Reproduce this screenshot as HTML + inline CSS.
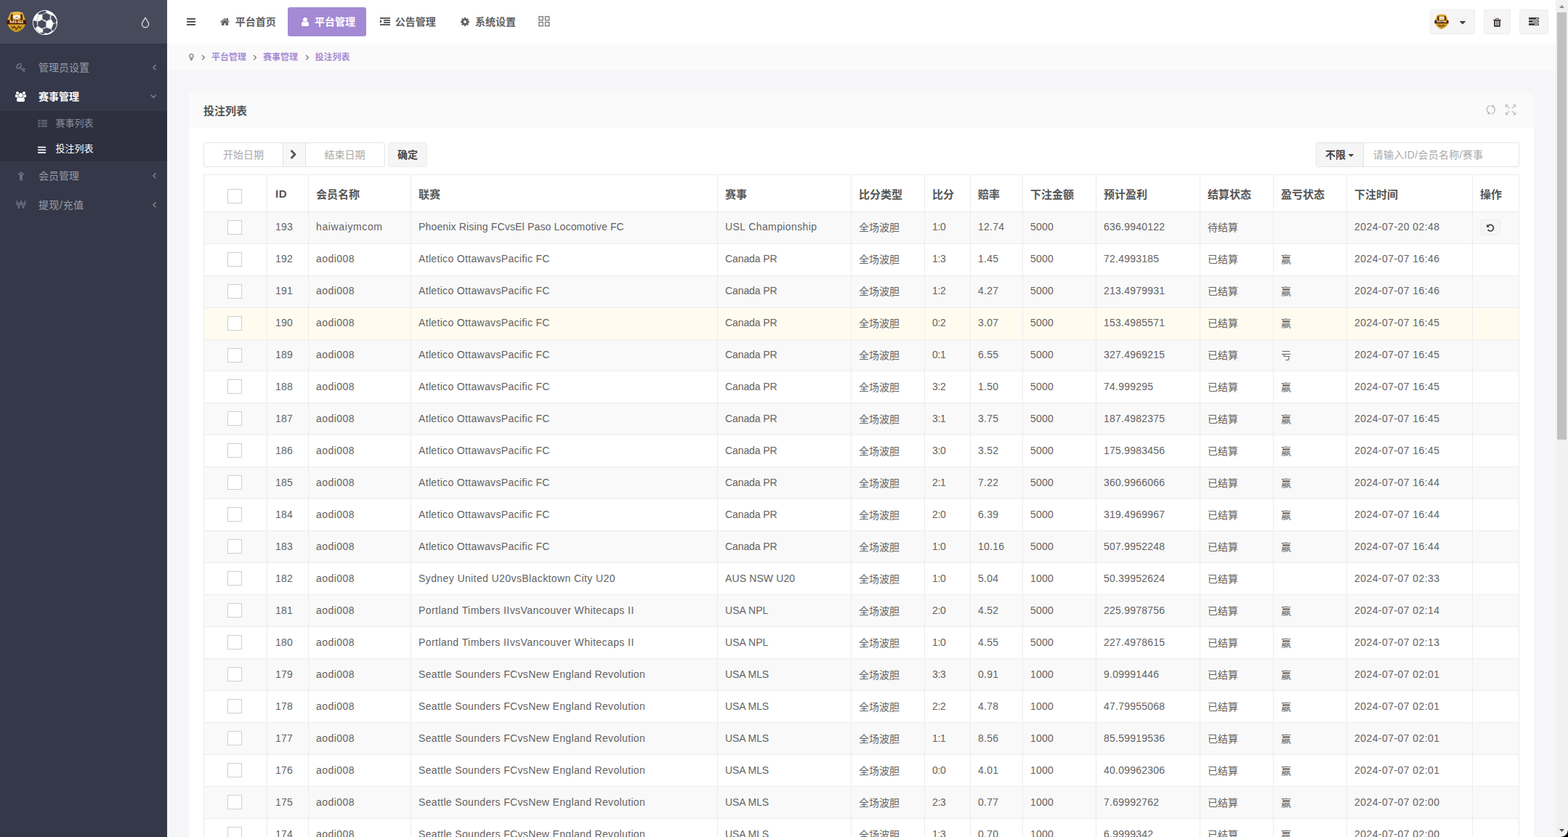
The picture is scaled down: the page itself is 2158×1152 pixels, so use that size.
<!DOCTYPE html><html lang="zh-CN"><head><meta charset="utf-8"><title>投注列表</title><style>*{box-sizing:border-box;margin:0;padding:0}
html,body{width:2158px;height:1152px;overflow:hidden;background:#f6f6f8;font-family:"Liberation Sans","Noto Sans CJK SC",sans-serif;font-size:14px;color:#5a5a5a}
.ic{display:inline-block;overflow:visible}
#side{position:absolute;left:0;top:0;width:230px;height:1152px;background:#353849}
#brand{position:absolute;left:0;top:0;width:230px;height:60px;background:#464a5b}
.mi{position:absolute;left:0;width:230px;height:40px}
.mi .mt{position:absolute;left:53px;top:0;line-height:40px;font-size:14px;white-space:nowrap}
.mi.on .mt{font-weight:bold}
#sub{position:absolute;left:0;top:153px;width:230px;height:69px;background:#2e3040}
.si{position:relative;height:35px;line-height:34px;font-size:13px;color:#8b8d9a}
.si span{position:absolute;left:76.5px;white-space:nowrap}
.si.on{color:#fff}
#head{position:absolute;left:230px;top:0;width:1911px;height:60px;background:#fff}
.tabbg{position:absolute;left:166px;top:10px;width:108px;height:40px;background:#a48ad4;border-radius:3px}
.tt{position:absolute;top:0;line-height:60px;font-weight:bold;font-size:14px;white-space:nowrap}
.hb{position:absolute;top:13px;height:34px;background:#f5f5f5;border:1px solid #eee;border-radius:2px}
#bc{position:absolute;left:230px;top:60px;width:1911px;height:37px;background:#fafafa}
.bl{position:absolute;top:0;line-height:39px;font-size:12px;font-weight:bold;color:#a48ad4;white-space:nowrap}
#panel{position:absolute;left:260px;top:128px;width:1851px;height:1100px;background:#fff}
#ph{position:absolute;left:0;top:0;width:1851px;height:48px;background:#fafafa}
#pt{position:absolute;left:20px;top:1px;line-height:48px;font-size:15px;font-weight:bold;color:#555}
#pb{position:absolute;left:0;top:48px;width:1851px}
.grp{position:absolute;top:20px;height:34px;border:1px solid #e4e4e4;border-radius:3px;background:#fff;overflow:hidden}
.ph{position:absolute;top:0;height:32px;line-height:32px;text-align:center;color:#a9a9a9;font-size:14px}
.addon{position:absolute;top:0;height:32px;background:#f7f7f7;border-left:1px solid #e2e2e2;border-right:1px solid #e2e2e2}
.btn{position:absolute;top:20px;height:34px;line-height:32px;text-align:center;background:#f5f5f5;border:1px solid #ececec;border-radius:3px;font-weight:bold;color:#444}
.addon2{position:absolute;top:0;height:32px;line-height:32px;background:#f5f5f5;border-right:1px solid #e2e2e2;padding-left:12px;color:#444}
.ph2{position:absolute;top:0;line-height:33px;color:#a9a9a9;white-space:nowrap;letter-spacing:.3px}
#t{position:absolute;left:20px;top:64px;width:1811px;table-layout:fixed;border-collapse:separate;border-spacing:0;border-right:1px solid #ececec;border-bottom:1px solid #ececec}
#t th,#t td{border-left:1px solid #ececec;border-top:1px solid #ececec;padding:0 0 0 10px;text-align:left;white-space:nowrap;overflow:hidden;vertical-align:middle;position:relative}
#t th{height:51px;font-size:15px;font-weight:bold;color:#555;padding-top:1px}
#t td{height:44px;font-size:14px;color:#636363;padding-bottom:3px}
#t td.n{letter-spacing:.23px}
#t td.i{padding-left:11px}
#t td.s{letter-spacing:-.4px}
#t td.d{letter-spacing:.43px}
#t tr.odd td{background:#f9f9f9}
#t tr.sh td{height:43px;padding-bottom:2px}
#t tr.lo td{padding-bottom:1px}
#t tr.hov td{background:#fffcef}
#t td.c{padding:0 2px 1px 0;text-align:center}
#t tr.sh td.c{padding-bottom:0}
#t th.c{padding:7px 2px 0 0;text-align:center}
.cb{display:inline-block;width:20px;height:20px;border:1px solid #cfcfcf;background:#fff;vertical-align:middle}
.ub{position:absolute;left:10px;top:10px;width:28px;height:22px;background:#f5f5f5;border:1px solid #ececec;border-radius:3px}
#sb{position:absolute;left:2141px;top:0;width:17px;height:1152px;background:#f1f1f1}
#thumb{position:absolute;left:2px;top:17px;width:13px;height:588px;background:#c1c1c1}
#corner{position:absolute;right:0;bottom:0;width:9px;height:9px;background:radial-gradient(circle at 0 0,rgba(0,0,0,0) 8px,#000 9px)}
</style></head><body>
<div id="side">
<div id="brand"><svg style="position:absolute;left:9px;top:15px" width="28" height="30" viewBox="0 0 28 30"><defs><linearGradient id="lg1" x1="0" y1="0" x2="0" y2="1"><stop offset="0" stop-color="#e6bd48"/><stop offset="0.5" stop-color="#d8a52c"/><stop offset="1" stop-color="#c29416"/></linearGradient></defs><path d="M5.7 2.5Q13.5 -0.4 22.1 2.5C23.5 6 25.5 11 26.8 15C26.2 19 25 21 23.9 23C21 26 17 28.5 13.3 29.5C9.5 28.5 6 26 3.9 23C2.6 21 1.2 19 0.4 15C1.6 11 4 6 5.7 2.5Z" fill="url(#lg1)"/><path d="M6.4 4.6C5.2 7.4 5.4 10.4 6 12.6L9 12.6C8 10 8 7 8.8 4.2ZM21.4 4.6C22.6 7.4 22.4 10.4 21.8 12.6L18.8 12.6C19.8 10 19.8 7 19 4.2Z" fill="#5a2409"/><path d="M0.3 12.5H27V18.4H0.3Z" fill="#4a1606"/><ellipse cx="14" cy="8.3" rx="4.5" ry="2.8" fill="#fbf6ee"/><ellipse cx="14.2" cy="9" rx="2.2" ry="1.3" fill="#b9b0ae"/><text x="4" y="17.3" font-size="5.2" font-weight="bold" textLength="19.6" lengthAdjust="spacingAndGlyphs" fill="#fbe3b0" font-family="Liberation Sans,sans-serif">MHB</text><path d="M6.1 20L8.4 22.6L10.8 20.4L13.6 24.6L16.4 20.4L18.8 22.6L21.2 20L19 24.4L16.4 22.6L13.6 26.6L10.8 22.6L8.2 24.4Z" fill="#5a2409"/></svg><svg style="position:absolute;left:44.9px;top:13.9px" width="34.1" height="34.2" viewBox="0 0 34.1 34.2"><defs><clipPath id="bc1"><circle cx="17" cy="17.1" r="16.1"/></clipPath></defs><circle cx="17" cy="17.1" r="16.6" fill="#fff" stroke="#fff" stroke-width="0.9"/><g clip-path="url(#bc1)" fill="#464a5b" stroke="#464a5b" stroke-width="0.5" stroke-linejoin="round"><polygon points="7.34,16.01 12.68,13.57 18.24,16.68 18.02,22.91 12.46,25.13 7.34,21.80"/><polygon points="13.79,6.01 18.68,4.09 23.80,6.45 23.58,12.46 19.13,14.77 13.57,12.01"/><polygon points="25.58,7.47 28.69,8.01 33.01,14.23 30.92,18.02 28.02,16.46 25.36,12.01"/><polygon points="28.47,19.57 32.25,17.70 33.36,21.80 30.69,27.14 26.69,28.25 26.25,24.91"/><polygon points="14.23,26.25 19.13,24.24 24.91,26.25 25.80,28.91 20.91,31.81 14.23,30.69"/><polygon points="0.44,14.23 5.34,15.57 6.23,21.80 3.56,25.13 0.89,23.13 0.00,17.79"/><polygon points="7.12,4.45 12.90,1.11 18.02,1.11 18.33,2.76 12.90,5.43 8.45,5.87"/><polygon points="9.79,31.36 13.79,31.05 16.68,31.81 14.68,33.36 11.12,32.92"/><line x1="6.23" y1="21.80" x2="7.34" y2="21.80" stroke-width="0.45"/><line x1="12.46" y1="25.13" x2="14.23" y2="26.25" stroke-width="0.45"/><line x1="18.24" y1="16.68" x2="19.13" y2="14.77" stroke-width="0.45"/><line x1="18.02" y1="22.91" x2="19.13" y2="24.24" stroke-width="0.45"/><line x1="7.34" y1="16.01" x2="5.34" y2="15.57" stroke-width="0.45"/><line x1="12.90" y1="5.43" x2="13.79" y2="6.01" stroke-width="0.45"/><line x1="23.80" y1="6.45" x2="25.58" y2="7.47" stroke-width="0.45"/><line x1="25.36" y1="12.01" x2="23.58" y2="12.46" stroke-width="0.45"/><line x1="28.02" y1="16.46" x2="28.47" y2="19.57" stroke-width="0.45"/><line x1="24.91" y1="26.25" x2="26.25" y2="24.91" stroke-width="0.45"/><line x1="12.68" y1="13.57" x2="13.57" y2="12.01" stroke-width="0.45"/><line x1="3.56" y1="25.13" x2="9.79" y2="31.36" stroke-width="0.45"/><line x1="8.45" y1="5.87" x2="5.34" y2="15.57" stroke-width="0.45"/></g></svg><svg style="position:absolute;left:193px;top:23px" width="14" height="16" viewBox="0 0 14 16" fill="none" stroke="#cfd1d9" stroke-width="1.5" stroke-linejoin="round"><path d="M7 1.4C8.4 4.2 11.6 7.2 11.6 10.2A4.6 4.6 0 0 1 2.4 10.2C2.4 7.2 5.6 4.2 7 1.4Z"/></svg></div>
<div class="mi" style="top:73px"><svg class="ic" style="width:14.00px;height:14px;position:absolute;left:22px;top:11px;" viewBox="0 -256 1792 1792" fill="#6b6e7e"><path d="M832 512C832 618 746 704 640 704C611 704 583 697 557 685C569 711 576 739 576 768C576 874 490 960 384 960C278 960 192 874 192 768C192 662 278 576 384 576C413 576 441 583 467 595C455 569 448 541 448 512C448 406 534 320 640 320C746 320 832 406 832 512ZM1683 1216C1683 1187 1404 924 1367 887C1361 881 1352 877 1344 877C1321 877 1229 969 1229 992C1229 1018 1323 1099 1344 1120L1248 1216L893 861C971 756 1024 628 1024 496C1024 278 873 128 656 128C328 128 0 456 0 784C0 1001 150 1152 368 1152C500 1152 628 1099 733 1021L1404 1692C1422 1710 1447 1720 1472 1720C1528 1720 1592 1656 1592 1600C1592 1575 1582 1550 1564 1532L1344 1312L1440 1216C1461 1237 1542 1331 1568 1331C1591 1331 1683 1239 1683 1216Z"/></svg><span class="mt" style="color:#9b9da7">管理员设置</span><svg class="ic" style="width:4.64px;height:13px;position:absolute;left:209.5px;top:11px;" viewBox="0 -256 640 1792" fill="#8b8d9a" stroke="#8b8d9a" stroke-width="70"><path d="M627 544C627 535 623 527 617 521L567 471C561 465 552 461 544 461C536 461 527 465 521 471L55 937C49 943 45 952 45 960C45 968 49 977 55 983L521 1449C527 1455 536 1459 544 1459C552 1459 561 1455 567 1449L617 1399C623 1393 627 1384 627 1376C627 1368 623 1359 617 1353L224 960L617 567C623 561 627 552 627 544Z"/></svg></div>
<div class="mi on" style="top:113px"><svg class="ic" style="width:15.00px;height:14px;position:absolute;left:21px;top:11.2px;" viewBox="0 -256 1920 1792" fill="#fff"><path d="M593 896C541 821 512 731 512 640C512 618 514 596 517 574C474 589 430 597 384 597C249 597 145 512 124 512C-3 512 0 784 0 865C0 976 94 1024 194 1024H328C395 944 489 899 593 896ZM1664 1533C1664 1307 1611 960 1318 960C1284 960 1160 1099 960 1099C760 1099 636 960 602 960C309 960 256 1307 256 1533C256 1695 363 1792 523 1792H1397C1557 1792 1664 1695 1664 1533ZM640 256C640 115 525 0 384 0C243 0 128 115 128 256C128 397 243 512 384 512C525 512 640 397 640 256ZM1344 640C1344 428 1172 256 960 256C748 256 576 428 576 640C576 852 748 1024 960 1024C1172 1024 1344 852 1344 640ZM1920 865C1920 784 1923 512 1796 512C1775 512 1671 597 1536 597C1490 597 1446 589 1403 574C1406 596 1408 618 1408 640C1408 731 1379 821 1327 896C1431 899 1525 944 1592 1024H1726C1826 1024 1920 976 1920 865ZM1792 256C1792 115 1677 0 1536 0C1395 0 1280 115 1280 256C1280 397 1395 512 1536 512C1677 512 1792 397 1792 256Z"/></svg><span class="mt" style="color:#fff">赛事管理</span><svg class="ic" style="width:8.36px;height:13px;position:absolute;left:206.6px;top:11.4px;" viewBox="0 -256 1152 1792" fill="#8b8d9a" stroke="#8b8d9a" stroke-width="70"><path d="M1075 736C1075 728 1071 719 1065 713L1015 663C1009 657 1000 653 992 653C984 653 975 657 969 663L576 1056L183 663C177 657 168 653 160 653C151 653 143 657 137 663L87 713C81 719 77 728 77 736C77 744 81 753 87 759L553 1225C559 1231 568 1235 576 1235C584 1235 593 1231 599 1225L1065 759C1071 753 1075 744 1075 736Z"/></svg></div>
<div id="sub"><div class="si"><svg class="ic" style="width:13.00px;height:13px;position:absolute;left:52px;top:8.7px;" viewBox="0 -256 1792 1792" fill="#5b5e6e"><path d="M512 1248C512 1195 469 1152 416 1152H96C43 1152 0 1195 0 1248V1440C0 1493 43 1536 96 1536H416C469 1536 512 1493 512 1440ZM512 736C512 683 469 640 416 640H96C43 640 0 683 0 736V928C0 981 43 1024 96 1024H416C469 1024 512 981 512 928ZM1792 1248C1792 1195 1749 1152 1696 1152H736C683 1152 640 1195 640 1248V1440C640 1493 683 1536 736 1536H1696C1749 1536 1792 1493 1792 1440ZM512 224C512 171 469 128 416 128H96C43 128 0 171 0 224V416C0 469 43 512 96 512H416C469 512 512 469 512 416ZM1792 736C1792 683 1749 640 1696 640H736C683 640 640 683 640 736V928C640 981 683 1024 736 1024H1696C1749 1024 1792 981 1792 928ZM1792 224C1792 171 1749 128 1696 128H736C683 128 640 171 640 224V416C640 469 683 512 736 512H1696C1749 512 1792 469 1792 416Z"/></svg><span>赛事列表</span></div><div class="si on"><svg class="ic" style="width:11.14px;height:13px;position:absolute;left:52.4px;top:9.6px;" viewBox="0 -256 1536 1792" fill="#fff"><path d="M1536 1344C1536 1309 1507 1280 1472 1280H64C29 1280 0 1309 0 1344V1472C0 1507 29 1536 64 1536H1472C1507 1536 1536 1507 1536 1472ZM1536 832C1536 797 1507 768 1472 768H64C29 768 0 797 0 832V960C0 995 29 1024 64 1024H1472C1507 1024 1536 995 1536 960ZM1536 320C1536 285 1507 256 1472 256H64C29 256 0 285 0 320V448C0 483 29 512 64 512H1472C1507 512 1536 483 1536 448Z"/></svg><span>投注列表</span></div></div>
<div class="mi" style="top:222px"><svg class="ic" style="width:10.00px;height:14px;position:absolute;left:23.5px;top:10.7px;" viewBox="0 -256 1280 1792" fill="#6b6e7e"><path d="M1188 548C1225 510 1225 450 1188 412C1150 375 1090 375 1052 412L824 640H456L228 412C190 375 130 375 92 412C55 450 55 510 92 548L384 840V1664C384 1726 434 1776 496 1776C558 1776 608 1726 608 1664V1280H672V1664C672 1726 722 1776 784 1776C846 1776 896 1726 896 1664V840L1188 548ZM864 384C864 260 764 160 640 160C516 160 416 260 416 384C416 508 516 608 640 608C764 608 864 508 864 384Z"/></svg><span class="mt" style="color:#9b9da7">会员管理</span><svg class="ic" style="width:4.64px;height:13px;position:absolute;left:209.5px;top:11px;" viewBox="0 -256 640 1792" fill="#8b8d9a" stroke="#8b8d9a" stroke-width="70"><path d="M627 544C627 535 623 527 617 521L567 471C561 465 552 461 544 461C536 461 527 465 521 471L55 937C49 943 45 952 45 960C45 968 49 977 55 983L521 1449C527 1455 536 1459 544 1459C552 1459 561 1455 567 1449L617 1399C623 1393 627 1384 627 1376C627 1368 623 1359 617 1353L224 960L617 567C623 561 627 552 627 544Z"/></svg></div>
<div class="mi" style="top:262px"><svg class="ic" style="width:14.00px;height:14px;position:absolute;left:21.5px;top:11.3px;" viewBox="0 -256 1792 1792" fill="#6b6e7e"><path d="M514 1195C514 1197 513 1200 513 1202C512 1200 512 1198 511 1196L436 896H595ZM630 768H405L373 640H665ZM822 768 856 640H926L961 768ZM1271 1196C1271 1198 1270 1200 1270 1202C1269 1200 1269 1198 1268 1195L1187 896H1349ZM1382 768H1152L1118 640H1415ZM1792 800C1792 782 1778 768 1760 768H1581L1615 640H1760C1778 640 1792 626 1792 608V544C1792 526 1778 512 1760 512H1649L1740 168C1743 159 1741 148 1735 140C1729 133 1719 128 1709 128H1572C1557 128 1544 138 1541 152L1448 512H1083L985 152C981 138 969 128 954 128H828C814 128 801 138 797 152L700 512H341L251 152C248 138 235 128 220 128H83C73 128 63 133 57 140C51 148 49 158 52 168L141 512H32C14 512 0 526 0 544V608C0 626 14 640 32 640H174L207 768H32C14 768 0 782 0 800V864C0 882 14 896 32 896H240L400 1512C403 1526 416 1536 430 1536H589C604 1536 616 1526 620 1512L787 896H996L1162 1512C1166 1526 1179 1536 1193 1536H1352C1366 1536 1379 1526 1383 1512L1547 896H1760C1778 896 1792 882 1792 864Z"/></svg><span class="mt" style="color:#9b9da7"><span style="letter-spacing:.55px">提现/充值</span></span><svg class="ic" style="width:4.64px;height:13px;position:absolute;left:209.5px;top:11px;" viewBox="0 -256 640 1792" fill="#8b8d9a" stroke="#8b8d9a" stroke-width="70"><path d="M627 544C627 535 623 527 617 521L567 471C561 465 552 461 544 461C536 461 527 465 521 471L55 937C49 943 45 952 45 960C45 968 49 977 55 983L521 1449C527 1455 536 1459 544 1459C552 1459 561 1455 567 1449L617 1399C623 1393 627 1384 627 1376C627 1368 623 1359 617 1353L224 960L617 567C623 561 627 552 627 544Z"/></svg></div>
</div>
<div id="head">
<svg class="ic" style="width:12.00px;height:14px;position:absolute;left:27px;top:21px;" viewBox="0 -256 1536 1792" fill="#555"><path d="M1536 1344C1536 1309 1507 1280 1472 1280H64C29 1280 0 1309 0 1344V1472C0 1507 29 1536 64 1536H1472C1507 1536 1536 1507 1536 1472ZM1536 832C1536 797 1507 768 1472 768H64C29 768 0 797 0 832V960C0 995 29 1024 64 1024H1472C1507 1024 1536 995 1536 960ZM1536 320C1536 285 1507 256 1472 256H64C29 256 0 285 0 320V448C0 483 29 512 64 512H1472C1507 512 1536 483 1536 448Z"/></svg>
<div class="tabbg"></div>
<svg class="ic" style="width:13.00px;height:14px;position:absolute;left:73.4px;top:21px;" viewBox="0 -256 1664 1792" fill="#606060"><path d="M1408 992C1408 990 1408 988 1407 986L832 512L257 986C257 988 256 990 256 992V1472C256 1507 285 1536 320 1536H704V1152H960V1536H1344C1379 1536 1408 1507 1408 1472ZM1631 923C1642 910 1640 889 1627 878L1408 696V288C1408 270 1394 256 1376 256H1184C1166 256 1152 270 1152 288V483L908 279C866 244 798 244 756 279L37 878C24 889 22 910 33 923L95 997C100 1003 108 1007 116 1008C125 1009 133 1006 140 1001L832 424L1524 1001C1530 1006 1537 1008 1545 1008C1546 1008 1547 1008 1548 1008C1556 1007 1564 1003 1569 997L1631 923Z"/></svg><span class="tt" style="left:93.7px;color:#606060">平台首页</span>
<svg class="ic" style="width:10.00px;height:14px;position:absolute;left:185px;top:21.4px;" viewBox="0 -256 1280 1792" fill="#fff"><path d="M1280 1399C1280 1136 1215 832 953 832C872 911 762 960 640 960C518 960 408 911 327 832C65 832 0 1136 0 1399C0 1545 96 1664 213 1664H1067C1184 1664 1280 1545 1280 1399ZM1024 512C1024 300 852 128 640 128C428 128 256 300 256 512C256 724 428 896 640 896C852 896 1024 724 1024 512Z"/></svg><span class="tt" style="left:203px;color:#fff">平台管理</span>
<svg class="ic" style="width:14.00px;height:14px;position:absolute;left:293px;top:21.2px;" viewBox="0 -256 1792 1792" fill="#606060"><path d="M352 832C352 824 349 815 343 809L55 521C49 515 40 512 32 512C15 512 0 527 0 544V1120C0 1137 15 1152 32 1152C40 1152 49 1149 55 1143L343 855C349 849 352 840 352 832ZM1792 1312C1792 1295 1777 1280 1760 1280H32C15 1280 0 1295 0 1312V1504C0 1521 15 1536 32 1536H1760C1777 1536 1792 1521 1792 1504ZM1792 928C1792 911 1777 896 1760 896H672C655 896 640 911 640 928V1120C640 1137 655 1152 672 1152H1760C1777 1152 1792 1137 1792 1120ZM1792 544C1792 527 1777 512 1760 512H672C655 512 640 527 640 544V736C640 753 655 768 672 768H1760C1777 768 1792 753 1792 736ZM1792 160C1792 143 1777 128 1760 128H32C15 128 0 143 0 160V352C0 369 15 384 32 384H1760C1777 384 1792 369 1792 352Z"/></svg><span class="tt" style="left:313.7px;color:#606060">公告管理</span>
<svg class="ic" style="width:12.00px;height:14px;position:absolute;left:404px;top:21px;" viewBox="0 -256 1536 1792" fill="#606060"><path d="M1024 896C1024 1037 909 1152 768 1152C627 1152 512 1037 512 896C512 755 627 640 768 640C909 640 1024 755 1024 896ZM1536 787C1536 770 1524 754 1507 751L1324 723C1314 690 1300 657 1283 625C1317 578 1354 534 1388 488C1393 481 1396 474 1396 465C1396 457 1394 449 1389 443C1347 384 1277 322 1224 273C1217 267 1208 263 1199 263C1190 263 1181 266 1175 272L1033 379C1004 364 974 352 943 342L915 158C913 141 897 128 879 128H657C639 128 625 140 621 156C605 216 599 281 592 342C561 352 530 365 501 380L363 273C355 267 346 263 337 263C303 263 168 409 144 442C139 449 135 456 135 465C135 474 139 482 145 489C182 534 218 579 252 627C236 657 223 687 213 719L27 747C12 750 0 768 0 783V1005C0 1022 12 1038 29 1041L212 1068C222 1102 236 1135 253 1167C219 1214 182 1258 148 1304C143 1311 140 1318 140 1327C140 1335 142 1343 147 1350C189 1408 259 1470 312 1518C319 1525 328 1529 337 1529C346 1529 355 1526 362 1520L503 1413C532 1428 562 1440 593 1450L621 1634C623 1651 639 1664 657 1664H879C897 1664 911 1652 915 1636C931 1576 937 1511 944 1450C975 1440 1006 1427 1035 1412L1173 1520C1181 1525 1190 1529 1199 1529C1233 1529 1368 1382 1392 1350C1398 1343 1401 1336 1401 1327C1401 1318 1397 1309 1391 1302C1354 1257 1318 1213 1284 1164C1300 1135 1312 1105 1323 1073L1508 1045C1524 1042 1536 1024 1536 1009Z"/></svg><span class="tt" style="left:424px;color:#606060">系统设置</span>
<svg style="position:absolute;left:511px;top:22px" width="16" height="15" viewBox="0 0 16 15" fill="none" stroke="#777" stroke-width="1.3"><rect x="0.8" y="0.8" width="5.4" height="5.2"/><rect x="9.4" y="0.8" width="5.4" height="5.2"/><rect x="0.8" y="8.6" width="5.4" height="5.2"/><rect x="9.4" y="8.6" width="5.4" height="5.2"/></svg>
<div class="hb" style="left:1738px;width:62px"><svg style="position:absolute;left:5.3px;top:5px" width="20.5" height="21.5" viewBox="0 0 28 30"><path d="M5.7 2.5Q13.5 -0.4 22.1 2.5C23.5 6 25.5 11 26.8 15C26.2 19 25 21 23.9 23C21 26 17 28.5 13.3 29.5C9.5 28.5 6 26 3.9 23C2.6 21 1.2 19 0.4 15C1.6 11 4 6 5.7 2.5Z" fill="#d3a22b"/><path d="M6.4 4.6C5.2 7.4 5.4 10.4 6 12.6L9 12.6C8 10 8 7 8.8 4.2ZM21.4 4.6C22.6 7.4 22.4 10.4 21.8 12.6L18.8 12.6C19.8 10 19.8 7 19 4.2Z" fill="#5a2409"/><path d="M0.3 12.5H27V18.4H0.3Z" fill="#4a1606"/><ellipse cx="14" cy="8.3" rx="4.5" ry="2.8" fill="#fbf6ee"/><ellipse cx="14.2" cy="9" rx="2.2" ry="1.3" fill="#b9b0ae"/><text x="4" y="17.3" font-size="5.2" font-weight="bold" textLength="19.6" lengthAdjust="spacingAndGlyphs" fill="#fbe3b0" font-family="Liberation Sans,sans-serif">MHB</text><path d="M6.1 20L8.4 22.6L10.8 20.4L13.6 24.6L16.4 20.4L18.8 22.6L21.2 20L19 24.4L16.4 22.6L13.6 26.6L10.8 22.6L8.2 24.4Z" fill="#5a2409"/></svg><svg class="ic" style="width:8.00px;height:14px;position:absolute;left:40px;top:7.5px;" viewBox="0 -256 1024 1792" fill="#444"><path d="M1024 704C1024 669 995 640 960 640H64C29 640 0 669 0 704C0 721 7 737 19 749L467 1197C479 1209 495 1216 512 1216C529 1216 545 1209 557 1197L1005 749C1017 737 1024 721 1024 704Z"/></svg></div>
<div class="hb" style="left:1812px;width:37px"><svg class="ic" style="width:11.00px;height:14px;position:absolute;left:11.5px;top:8px;" viewBox="0 -256 1408 1792" fill="#4a4048"><path d="M512 1376C512 1394 498 1408 480 1408H416C398 1408 384 1394 384 1376V672C384 654 398 640 416 640H480C498 640 512 654 512 672V1376ZM768 1376C768 1394 754 1408 736 1408H672C654 1408 640 1394 640 1376V672C640 654 654 640 672 640H736C754 640 768 654 768 672V1376ZM1024 1376C1024 1394 1010 1408 992 1408H928C910 1408 896 1394 896 1376V672C896 654 910 640 928 640H992C1010 640 1024 654 1024 672V1376ZM480 384 529 267C532 263 540 257 546 256H863C868 257 877 263 880 267L928 384ZM1408 416C1408 398 1394 384 1376 384H1067L997 217C977 168 917 128 864 128H544C491 128 431 168 411 217L341 384H32C14 384 0 398 0 416V480C0 498 14 512 32 512H128V1464C128 1574 200 1664 288 1664H1120C1208 1664 1280 1570 1280 1460V512H1376C1394 512 1408 498 1408 480Z"/></svg></div>
<div class="hb" style="left:1861px;width:40px"><svg class="ic" style="width:14.00px;height:14px;position:absolute;left:11.5px;top:7px;" viewBox="0 -256 1792 1792" fill="#444"><path d="M1024 1408V1280H1664V1408ZM640 896V768H1664V896ZM1280 384V256H1664V384ZM1792 1216C1792 1181 1763 1152 1728 1152H64C29 1152 0 1181 0 1216V1472C0 1507 29 1536 64 1536H1728C1763 1536 1792 1507 1792 1472ZM1792 704C1792 669 1763 640 1728 640H64C29 640 0 669 0 704V960C0 995 29 1024 64 1024H1728C1763 1024 1792 995 1792 960ZM1792 192C1792 157 1763 128 1728 128H64C29 128 0 157 0 192V448C0 483 29 512 64 512H1728C1763 512 1792 483 1792 448Z"/></svg></div>
</div>
<div id="bc"><svg class="ic" style="width:6.86px;height:12px;position:absolute;left:29.5px;top:11px;" viewBox="0 -256 1024 1792" fill="#999"><path d="M768 640C768 781 653 896 512 896C371 896 256 781 256 640C256 499 371 384 512 384C653 384 768 499 768 640ZM1024 640C1024 357 795 128 512 128C229 128 0 357 0 640C0 701 7 764 33 819L398 1593C418 1637 464 1664 512 1664C560 1664 606 1637 627 1593L991 819C1017 764 1024 701 1024 640Z"/></svg>
<svg class="ic" style="width:4.29px;height:12px;position:absolute;left:48.3px;top:10.5px;" viewBox="0 -256 640 1792" fill="#777" stroke="#777" stroke-width="70"><path d="M595 960C595 952 591 943 585 937L119 471C113 465 104 461 96 461C88 461 79 465 73 471L23 521C17 527 13 536 13 544C13 552 17 561 23 567L416 960L23 1353C17 1359 13 1368 13 1376C13 1385 17 1393 23 1399L73 1449C79 1455 88 1459 96 1459C104 1459 113 1455 119 1449L585 983C591 977 595 968 595 960Z"/></svg><span class="bl" style="left:61px">平台管理</span><svg class="ic" style="width:4.29px;height:12px;position:absolute;left:119.3px;top:10.5px;" viewBox="0 -256 640 1792" fill="#777" stroke="#777" stroke-width="70"><path d="M595 960C595 952 591 943 585 937L119 471C113 465 104 461 96 461C88 461 79 465 73 471L23 521C17 527 13 536 13 544C13 552 17 561 23 567L416 960L23 1353C17 1359 13 1368 13 1376C13 1385 17 1393 23 1399L73 1449C79 1455 88 1459 96 1459C104 1459 113 1455 119 1449L585 983C591 977 595 968 595 960Z"/></svg><span class="bl" style="left:132px">赛事管理</span><svg class="ic" style="width:4.29px;height:12px;position:absolute;left:191.3px;top:10.5px;" viewBox="0 -256 640 1792" fill="#777" stroke="#777" stroke-width="70"><path d="M595 960C595 952 591 943 585 937L119 471C113 465 104 461 96 461C88 461 79 465 73 471L23 521C17 527 13 536 13 544C13 552 17 561 23 567L416 960L23 1353C17 1359 13 1368 13 1376C13 1385 17 1393 23 1399L73 1449C79 1455 88 1459 96 1459C104 1459 113 1455 119 1449L585 983C591 977 595 968 595 960Z"/></svg><span class="bl" style="left:203.5px">投注列表</span></div>
<div id="panel"><div id="ph"><span id="pt">投注列表</span><svg style="position:absolute;left:1783.5px;top:15px" width="16" height="16" viewBox="0 0 16 16" fill="none" stroke="#bdbdbd" stroke-width="1.35" stroke-linecap="round"><path d="M6.3 2.3A5.8 5.8 0 0 0 4.9 12.6"/><path d="M9.3 13.7A5.8 5.8 0 0 0 10.7 3.4"/><path d="M3.4 14.9L8 13.6L4.6 10.4Z" fill="#bdbdbd" stroke="none"/><path d="M12.2 1.1L7.6 2.4L11 5.6Z" fill="#bdbdbd" stroke="none"/></svg><svg style="position:absolute;left:1811px;top:15px" width="16" height="16" viewBox="0 0 16 16" fill="#c2c2c2" stroke="#c2c2c2" stroke-width="1.3"><path d="M2.2 2.2L6.2 6.2M13.8 2.2L9.8 6.2M2.2 13.8L6.2 9.8M13.8 13.8L9.8 9.8" fill="none"/><path d="M0.8 0.8H5L0.8 5ZM15.2 0.8V5L11 0.8ZM0.8 15.2V11L5 15.2ZM15.2 15.2H11L15.2 11Z" stroke="none"/></svg></div>
<div id="pb">
<div class="grp" style="left:20px;width:250px"><span class="ph" style="left:0;width:108px">开始日期</span><span class="addon" style="left:108px;width:32px"><svg class="ic" style="width:10.00px;height:14px;position:absolute;left:9px;top:7px;" viewBox="0 -256 1280 1792" fill="#555"><path d="M1107 877C1132 852 1132 812 1107 787L365 45C340 20 300 20 275 45L109 211C84 236 84 276 109 301L640 832L109 1363C84 1388 84 1428 109 1453L275 1619C300 1644 340 1644 365 1619L1107 877Z"/></svg></span><span class="ph" style="left:139px;width:109px">结束日期</span></div>
<div class="btn" style="left:274px;width:54px">确定</div>
<div class="grp" style="left:1551px;width:280px"><span class="addon2" style="left:0;width:65px"><b>不限</b><svg class="ic" style="width:6.86px;height:12px;position:absolute;left:44px;top:8.5px;" viewBox="0 -256 1024 1792" fill="#444"><path d="M1024 704C1024 669 995 640 960 640H64C29 640 0 669 0 704C0 721 7 737 19 749L467 1197C479 1209 495 1216 512 1216C529 1216 545 1209 557 1197L1005 749C1017 737 1024 721 1024 704Z"/></svg></span><span class="ph2" style="left:77.7px">请输入ID/会员名称/赛事</span></div>
<table id="t"><colgroup><col style="width:87px"><col style="width:57px"><col style="width:141px"><col style="width:422px"><col style="width:184px"><col style="width:101px"><col style="width:63px"><col style="width:72px"><col style="width:101px"><col style="width:143px"><col style="width:101px"><col style="width:101px"><col style="width:173px"><col style="width:64px"></colgroup><thead><tr>
<th class="c"><i class="cb"></i></th>
<th><span style="letter-spacing:.6px;padding-left:1px">ID</span></th>
<th>会员名称</th>
<th>联赛</th>
<th>赛事</th>
<th>比分类型</th>
<th>比分</th>
<th>赔率</th>
<th>下注金额</th>
<th>预计盈利</th>
<th>结算状态</th>
<th>盈亏状态</th>
<th>下注时间</th>
<th>操作</th>
</tr></thead><tbody>
<tr class="odd"><td class="c"><i class="cb"></i></td><td class="n i">193</td><td><span style="letter-spacing:0.62px">haiwaiymcom</span></td><td><span style="letter-spacing:0.167px">Phoenix Rising FCvsEl Paso Locomotive FC</span></td><td><span style="letter-spacing:0.4px">USL Championship</span></td><td>全场波胆</td><td class="s">1:0</td><td class="n">12.74</td><td class="n">5000</td><td class="n">636.9940122</td><td>待结算</td><td></td><td class="d">2024-07-20 02:48</td><td><span class="ub"><svg class="ic" style="width:10.29px;height:12px;position:absolute;left:7.5px;top:3px;" viewBox="0 -256 1536 1792" fill="#444"><path d="M1536 896C1536 473 1191 128 768 128C571 128 380 207 239 340L109 211C91 192 63 187 40 197C16 207 0 230 0 256V704C0 739 29 768 64 768H512C538 768 561 752 571 728C581 705 576 677 557 659L420 521C513 434 637 384 768 384C1050 384 1280 614 1280 896C1280 1178 1050 1408 768 1408C609 1408 462 1336 364 1209C359 1202 350 1198 341 1197C332 1197 323 1200 316 1206L179 1344C168 1355 167 1374 177 1387C323 1563 539 1664 768 1664C1191 1664 1536 1319 1536 896Z"/></svg></span></td></tr>
<tr class=""><td class="c"><i class="cb"></i></td><td class="n i">192</td><td><span style="letter-spacing:0.47px">aodi008</span></td><td><span style="letter-spacing:0.327px">Atletico OttawavsPacific FC</span></td><td><span style="letter-spacing:-0.09px">Canada PR</span></td><td>全场波胆</td><td class="s">1:3</td><td class="n">1.45</td><td class="n">5000</td><td class="n">72.4993185</td><td>已结算</td><td>赢</td><td class="d">2024-07-07 16:46</td><td></td></tr>
<tr class="odd"><td class="c"><i class="cb"></i></td><td class="n i">191</td><td><span style="letter-spacing:0.47px">aodi008</span></td><td><span style="letter-spacing:0.327px">Atletico OttawavsPacific FC</span></td><td><span style="letter-spacing:-0.09px">Canada PR</span></td><td>全场波胆</td><td class="s">1:2</td><td class="n">4.27</td><td class="n">5000</td><td class="n">213.4979931</td><td>已结算</td><td>赢</td><td class="d">2024-07-07 16:46</td><td></td></tr>
<tr class="hov"><td class="c"><i class="cb"></i></td><td class="n i">190</td><td><span style="letter-spacing:0.47px">aodi008</span></td><td><span style="letter-spacing:0.327px">Atletico OttawavsPacific FC</span></td><td><span style="letter-spacing:-0.09px">Canada PR</span></td><td>全场波胆</td><td class="s">0:2</td><td class="n">3.07</td><td class="n">5000</td><td class="n">153.4985571</td><td>已结算</td><td>赢</td><td class="d">2024-07-07 16:45</td><td></td></tr>
<tr class="odd sh"><td class="c"><i class="cb"></i></td><td class="n i">189</td><td><span style="letter-spacing:0.47px">aodi008</span></td><td><span style="letter-spacing:0.327px">Atletico OttawavsPacific FC</span></td><td><span style="letter-spacing:-0.09px">Canada PR</span></td><td>全场波胆</td><td class="s">0:1</td><td class="n">6.55</td><td class="n">5000</td><td class="n">327.4969215</td><td>已结算</td><td>亏</td><td class="d">2024-07-07 16:45</td><td></td></tr>
<tr class=" lo"><td class="c"><i class="cb"></i></td><td class="n i">188</td><td><span style="letter-spacing:0.47px">aodi008</span></td><td><span style="letter-spacing:0.327px">Atletico OttawavsPacific FC</span></td><td><span style="letter-spacing:-0.09px">Canada PR</span></td><td>全场波胆</td><td class="s">3:2</td><td class="n">1.50</td><td class="n">5000</td><td class="n">74.999295</td><td>已结算</td><td>赢</td><td class="d">2024-07-07 16:45</td><td></td></tr>
<tr class="odd lo"><td class="c"><i class="cb"></i></td><td class="n i">187</td><td><span style="letter-spacing:0.47px">aodi008</span></td><td><span style="letter-spacing:0.327px">Atletico OttawavsPacific FC</span></td><td><span style="letter-spacing:-0.09px">Canada PR</span></td><td>全场波胆</td><td class="s">3:1</td><td class="n">3.75</td><td class="n">5000</td><td class="n">187.4982375</td><td>已结算</td><td>赢</td><td class="d">2024-07-07 16:45</td><td></td></tr>
<tr class=" lo"><td class="c"><i class="cb"></i></td><td class="n i">186</td><td><span style="letter-spacing:0.47px">aodi008</span></td><td><span style="letter-spacing:0.327px">Atletico OttawavsPacific FC</span></td><td><span style="letter-spacing:-0.09px">Canada PR</span></td><td>全场波胆</td><td class="s">3:0</td><td class="n">3.52</td><td class="n">5000</td><td class="n">175.9983456</td><td>已结算</td><td>赢</td><td class="d">2024-07-07 16:45</td><td></td></tr>
<tr class="odd lo"><td class="c"><i class="cb"></i></td><td class="n i">185</td><td><span style="letter-spacing:0.47px">aodi008</span></td><td><span style="letter-spacing:0.327px">Atletico OttawavsPacific FC</span></td><td><span style="letter-spacing:-0.09px">Canada PR</span></td><td>全场波胆</td><td class="s">2:1</td><td class="n">7.22</td><td class="n">5000</td><td class="n">360.9966066</td><td>已结算</td><td>赢</td><td class="d">2024-07-07 16:44</td><td></td></tr>
<tr class=" lo"><td class="c"><i class="cb"></i></td><td class="n i">184</td><td><span style="letter-spacing:0.47px">aodi008</span></td><td><span style="letter-spacing:0.327px">Atletico OttawavsPacific FC</span></td><td><span style="letter-spacing:-0.09px">Canada PR</span></td><td>全场波胆</td><td class="s">2:0</td><td class="n">6.39</td><td class="n">5000</td><td class="n">319.4969967</td><td>已结算</td><td>赢</td><td class="d">2024-07-07 16:44</td><td></td></tr>
<tr class="odd lo"><td class="c"><i class="cb"></i></td><td class="n i">183</td><td><span style="letter-spacing:0.47px">aodi008</span></td><td><span style="letter-spacing:0.327px">Atletico OttawavsPacific FC</span></td><td><span style="letter-spacing:-0.09px">Canada PR</span></td><td>全场波胆</td><td class="s">1:0</td><td class="n">10.16</td><td class="n">5000</td><td class="n">507.9952248</td><td>已结算</td><td>赢</td><td class="d">2024-07-07 16:44</td><td></td></tr>
<tr class=" lo"><td class="c"><i class="cb"></i></td><td class="n i">182</td><td><span style="letter-spacing:0.47px">aodi008</span></td><td><span style="letter-spacing:0.403px">Sydney United U20vsBlacktown City U20</span></td><td><span style="letter-spacing:0.125px">AUS NSW U20</span></td><td>全场波胆</td><td class="s">1:0</td><td class="n">5.04</td><td class="n">1000</td><td class="n">50.39952624</td><td>已结算</td><td></td><td class="d">2024-07-07 02:33</td><td></td></tr>
<tr class="odd lo"><td class="c"><i class="cb"></i></td><td class="n i">181</td><td><span style="letter-spacing:0.47px">aodi008</span></td><td><span style="letter-spacing:0.429px">Portland Timbers IIvsVancouver Whitecaps II</span></td><td><span style="letter-spacing:0.04px">USA NPL</span></td><td>全场波胆</td><td class="s">2:0</td><td class="n">4.52</td><td class="n">5000</td><td class="n">225.9978756</td><td>已结算</td><td>赢</td><td class="d">2024-07-07 02:14</td><td></td></tr>
<tr class=" lo"><td class="c"><i class="cb"></i></td><td class="n i">180</td><td><span style="letter-spacing:0.47px">aodi008</span></td><td><span style="letter-spacing:0.429px">Portland Timbers IIvsVancouver Whitecaps II</span></td><td><span style="letter-spacing:0.04px">USA NPL</span></td><td>全场波胆</td><td class="s">1:0</td><td class="n">4.55</td><td class="n">5000</td><td class="n">227.4978615</td><td>已结算</td><td>赢</td><td class="d">2024-07-07 02:13</td><td></td></tr>
<tr class="odd lo"><td class="c"><i class="cb"></i></td><td class="n i">179</td><td><span style="letter-spacing:0.47px">aodi008</span></td><td><span style="letter-spacing:0.345px">Seattle Sounders FCvsNew England Revolution</span></td><td><span style="letter-spacing:-0.08px">USA MLS</span></td><td>全场波胆</td><td class="s">3:3</td><td class="n">0.91</td><td class="n">1000</td><td class="n">9.09991446</td><td>已结算</td><td>赢</td><td class="d">2024-07-07 02:01</td><td></td></tr>
<tr class=" lo"><td class="c"><i class="cb"></i></td><td class="n i">178</td><td><span style="letter-spacing:0.47px">aodi008</span></td><td><span style="letter-spacing:0.345px">Seattle Sounders FCvsNew England Revolution</span></td><td><span style="letter-spacing:-0.08px">USA MLS</span></td><td>全场波胆</td><td class="s">2:2</td><td class="n">4.78</td><td class="n">1000</td><td class="n">47.79955068</td><td>已结算</td><td>赢</td><td class="d">2024-07-07 02:01</td><td></td></tr>
<tr class="odd lo"><td class="c"><i class="cb"></i></td><td class="n i">177</td><td><span style="letter-spacing:0.47px">aodi008</span></td><td><span style="letter-spacing:0.345px">Seattle Sounders FCvsNew England Revolution</span></td><td><span style="letter-spacing:-0.08px">USA MLS</span></td><td>全场波胆</td><td class="s">1:1</td><td class="n">8.56</td><td class="n">1000</td><td class="n">85.59919536</td><td>已结算</td><td>赢</td><td class="d">2024-07-07 02:01</td><td></td></tr>
<tr class=" lo"><td class="c"><i class="cb"></i></td><td class="n i">176</td><td><span style="letter-spacing:0.47px">aodi008</span></td><td><span style="letter-spacing:0.345px">Seattle Sounders FCvsNew England Revolution</span></td><td><span style="letter-spacing:-0.08px">USA MLS</span></td><td>全场波胆</td><td class="s">0:0</td><td class="n">4.01</td><td class="n">1000</td><td class="n">40.09962306</td><td>已结算</td><td>赢</td><td class="d">2024-07-07 02:01</td><td></td></tr>
<tr class="odd lo"><td class="c"><i class="cb"></i></td><td class="n i">175</td><td><span style="letter-spacing:0.47px">aodi008</span></td><td><span style="letter-spacing:0.345px">Seattle Sounders FCvsNew England Revolution</span></td><td><span style="letter-spacing:-0.08px">USA MLS</span></td><td>全场波胆</td><td class="s">2:3</td><td class="n">0.77</td><td class="n">1000</td><td class="n">7.69992762</td><td>已结算</td><td>赢</td><td class="d">2024-07-07 02:00</td><td></td></tr>
<tr class=" lo"><td class="c"><i class="cb"></i></td><td class="n i">174</td><td><span style="letter-spacing:0.47px">aodi008</span></td><td><span style="letter-spacing:0.345px">Seattle Sounders FCvsNew England Revolution</span></td><td><span style="letter-spacing:-0.08px">USA MLS</span></td><td>全场波胆</td><td class="s">1:3</td><td class="n">0.70</td><td class="n">1000</td><td class="n">6.9999342</td><td>已结算</td><td>赢</td><td class="d">2024-07-07 02:00</td><td></td></tr>
<tr class="odd lo"><td class="c"><i class="cb"></i></td><td class="n i">173</td><td><span style="letter-spacing:0.47px">aodi008</span></td><td><span style="letter-spacing:0.345px">Seattle Sounders FCvsNew England Revolution</span></td><td><span style="letter-spacing:-0.08px">USA MLS</span></td><td>全场波胆</td><td class="s">0:3</td><td class="n">0.65</td><td class="n">1000</td><td class="n">6.4999389</td><td>已结算</td><td>赢</td><td class="d">2024-07-07 02:00</td><td></td></tr>
</tbody></table>
</div></div>
<div id="sb"><div id="thumb"></div><svg style="position:absolute;left:5px;top:7px" width="7" height="4" viewBox="0 0 7 4"><path d="M0 4L3.5 0L7 4Z" fill="#8b8b8b"/></svg><svg style="position:absolute;left:5px;top:1141px" width="7" height="4" viewBox="0 0 7 4"><path d="M0 0L3.5 4L7 0Z" fill="#505050"/></svg></div>
<div id="corner"></div>
</body></html>
